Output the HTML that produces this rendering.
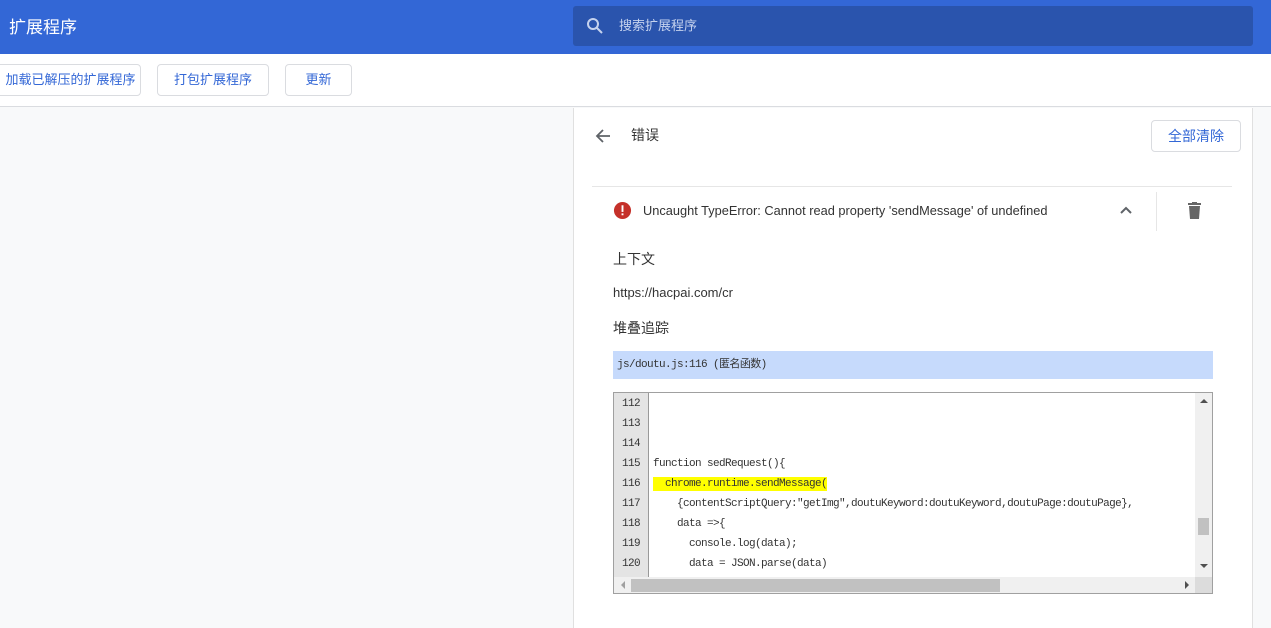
<!DOCTYPE html>
<html><head><meta charset="utf-8"><style>
*{margin:0;padding:0;box-sizing:border-box}
body{width:1271px;height:624px;overflow:hidden;background:#f8f9fa;font-family:"Liberation Sans","Noto Sans CJK SC",sans-serif;position:relative}
.a{position:absolute}
.hdr{left:0;top:0;width:1271px;height:54px;background:#3367d6}
.btn{top:64px;height:32px;border:1px solid #dadce0;border-radius:4px;background:#fff;color:#3367d6;font-size:13px;line-height:30px;text-align:center}
.code{font-family:"Liberation Mono","Noto Sans CJK SC",monospace;font-size:11px;letter-spacing:-0.6px;color:#333}
.ln{position:absolute;left:0;width:34px;text-align:center;font-size:11px}
</style></head><body>
<div class="a hdr"></div>
<div class="a" style="left:9px;top:13px;color:#fff;font-size:17px">扩展程序</div>
<div class="a" style="left:573px;top:6px;width:680px;height:40px;background:#2a54ad;border-radius:3px"></div>
<svg class="a" style="left:585px;top:16px" width="20" height="20" viewBox="0 0 20 20"><circle cx="8" cy="8" r="5" fill="none" stroke="#c5d2ee" stroke-width="2"/><path d="M12 12l5 5" stroke="#c5d2ee" stroke-width="2"/></svg>
<div class="a" style="left:619px;top:15px;color:#c5d2ee;font-size:13px">搜索扩展程序</div>
<div class="a" style="left:0;top:54px;width:1271px;height:53px;background:#fff;border-bottom:1px solid #dadce0"></div>
<div class="a btn" style="left:-10px;width:151px;padding-left:10px">加载已解压的扩展程序</div>
<div class="a btn" style="left:157px;width:112px">打包扩展程序</div>
<div class="a btn" style="left:285px;width:67px">更新</div>
<div class="a" style="left:573px;top:108px;width:680px;height:520px;background:#fff;border-left:1px solid #e0e0e0;border-right:1px solid #e0e0e0"></div>
<svg class="a" style="left:594px;top:127px" width="18" height="18" viewBox="0 0 18 18"><path d="M16 9H3M9 3L3 9l6 6" fill="none" stroke="#5f6368" stroke-width="1.8"/></svg>
<div class="a" style="left:631px;top:125px;font-size:14px;color:#333">错误</div>
<div class="a btn" style="left:1151px;top:120px;width:90px;height:32px;font-size:14px">全部清除</div>
<div class="a" style="left:592px;top:186px;width:640px;height:1px;background:#e6e6e6"></div>
<svg class="a" style="left:613px;top:201px" width="19" height="19" viewBox="0 0 20 20"><circle cx="10" cy="10" r="9" fill="#c5312a"/><rect x="9" y="4.5" width="2" height="7" fill="#fff"/><rect x="9" y="13" width="2" height="2" fill="#fff"/></svg>
<div class="a" style="left:643px;top:203px;font-size:12.8px;color:#333">Uncaught TypeError: Cannot read property 'sendMessage' of undefined</div>
<svg class="a" style="left:1119px;top:205px" width="14" height="10" viewBox="0 0 14 10"><path d="M2 8l5-5 5 5" fill="none" stroke="#5f6368" stroke-width="2"/></svg>
<div class="a" style="left:1156px;top:192px;width:1px;height:39px;background:#e6e6e6"></div>
<svg class="a" style="left:1187px;top:202px" width="15" height="17" viewBox="0 0 15 17"><rect x="1" y="1" width="13" height="2" fill="#666"/><rect x="5" y="0" width="5" height="2" fill="#666"/><path d="M2 4h11l-1 13H3z" fill="#666"/></svg>
<div class="a" style="left:613px;top:249px;font-size:14px;color:#333">上下文</div>
<div class="a" style="left:613px;top:285px;font-size:13px;color:#333">https://hacpai.com/cr</div>
<div class="a" style="left:613px;top:318px;font-size:14px;color:#333">堆叠追踪</div>
<div class="a code" style="left:613px;top:351px;width:600px;height:28px;background:#c6dafc;line-height:28px;padding-left:4px">js/doutu.js:116 (匿名函数)</div>
<div class="a" style="left:613px;top:392px;width:600px;height:202px;border:1px solid #a0a0a0;background:#fff;overflow:hidden">
 <div class="a" style="left:0;top:0;width:35px;height:184px;background:#e4e4e4;border-right:1px solid #999"></div>
 <div class="a code" style="left:0;top:1px;width:580px;height:184px;line-height:20px">
  <div class="ln" style="top:0">112</div><div class="ln" style="top:20px">113</div><div class="ln" style="top:40px">114</div><div class="ln" style="top:60px">115</div><div class="ln" style="top:80px">116</div><div class="ln" style="top:100px">117</div><div class="ln" style="top:120px">118</div><div class="ln" style="top:140px">119</div><div class="ln" style="top:160px">120</div>
  <div class="a" style="left:39px;top:60px;white-space:pre">function sedRequest(){</div>
  <div class="a" style="left:39px;top:83px;height:14px;line-height:14px;background:#ffff00;white-space:pre">  chrome.runtime.sendMessage(</div>
  <div class="a" style="left:39px;top:100px;white-space:pre">    {contentScriptQuery:"getImg",doutuKeyword:doutuKeyword,doutuPage:doutuPage},</div>
  <div class="a" style="left:39px;top:120px;white-space:pre">    data =>{</div>
  <div class="a" style="left:39px;top:140px;white-space:pre">      console.log(data);</div>
  <div class="a" style="left:39px;top:160px;white-space:pre">      data = JSON.parse(data)</div>
 </div>
 <div class="a" style="left:581px;top:0;width:17px;height:184px;background:#f0f0f0"></div>
 <div class="a" style="left:584px;top:125px;width:11px;height:17px;background:#c1c1c1"></div>
 <div class="a" style="left:586px;top:6px;width:0;height:0;border:4px solid transparent;border-bottom:4px solid #505050;border-top:0"></div>
 <div class="a" style="left:586px;top:171px;width:0;height:0;border:4px solid transparent;border-top:4px solid #505050;border-bottom:0"></div>
 <div class="a" style="left:0;top:184px;width:598px;height:16px;background:#f0f0f0"></div>
 <div class="a" style="left:17px;top:186px;width:369px;height:13px;background:#c1c1c1"></div>
 <div class="a" style="left:7px;top:188px;width:0;height:0;border:4px solid transparent;border-right:4px solid #a0a0a0;border-left:0"></div>
 <div class="a" style="left:571px;top:188px;width:0;height:0;border:4px solid transparent;border-left:4px solid #505050;border-right:0"></div>
 <div class="a" style="left:581px;top:184px;width:17px;height:16px;background:#dcdcdc"></div>
</div>
</body></html>
